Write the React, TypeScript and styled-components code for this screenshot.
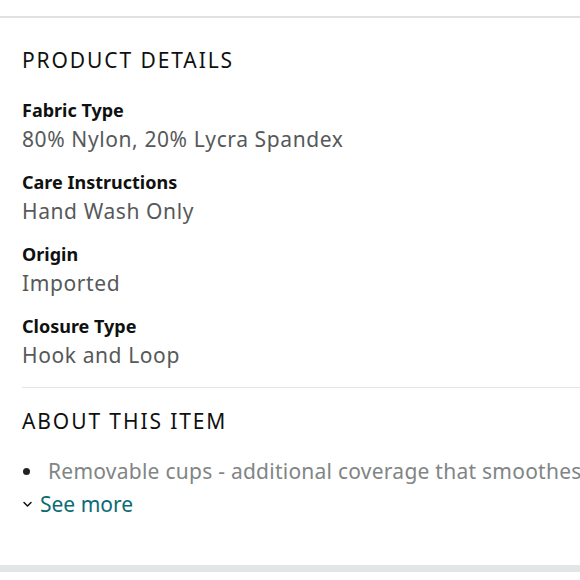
import React from "react";
import styled, { createGlobalStyle } from "styled-components";

interface Detail {
  label: string;
  value: string;
}

const details: Detail[] = [
  { label: "Fabric Type", value: "80% Nylon, 20% Lycra Spandex" },
  { label: "Care Instructions", value: "Hand Wash Only" },
  { label: "Origin", value: "Imported" },
  { label: "Closure Type", value: "Hook and Loop" },
];

const GlobalStyle = createGlobalStyle`
  html, body {
    margin: 0;
    padding: 0;
    background: #fff;
  }
  body {
    font-family: "Noto Sans", "Open Sans", sans-serif;
    color: #0f1111;
  }
`;

const Page = styled.div`
  width: 580px;
  height: 580px;
  overflow: hidden;
  display: flex;
  flex-direction: column;
  padding-top: 16px;
  box-sizing: border-box;
`;

const TopRule = styled.div`
  height: 2px;
  background: #dfe2e2;
`;

const Section = styled.section<{ $divided?: boolean }>`
  margin-left: 22px;
  padding-top: ${(p) => (p.$divided ? "19px" : "28px")};
  padding-bottom: 17px;
  border-top: ${(p) => (p.$divided ? "1px solid #e3e6e6" : "none")};
`;

const Heading = styled.h2<{ $gap?: number }>`
  margin: 0 0 ${(p) => p.$gap ?? 22}px;
  font-size: 21px;
  font-weight: 400;
  letter-spacing: 1.9px;
  line-height: 28px;
  color: #0f1111;
`;

const DetailList = styled.dl`
  margin: 0;
  display: flex;
  flex-direction: column;
  gap: 14px;
`;

const DetailGroup = styled.div`
  display: flex;
  flex-direction: column;
`;

const Label = styled.dt`
  font-size: 18px;
  font-weight: 700;
  line-height: 29px;
  color: #0f1111;
`;

const Value = styled.dd`
  margin: 0;
  font-size: 21px;
  letter-spacing: 0.6px;
  line-height: 29px;
  color: #565959;
`;

const Bullet = styled.div`
  display: flex;
  align-items: center;
  gap: 18px;
  white-space: nowrap;
  font-size: 21px;
  letter-spacing: 0.25px;
  line-height: 30px;
  color: #818585;
`;

const Dot = styled.span`
  flex: none;
  width: 7px;
  height: 7px;
  margin-left: 1px;
  border-radius: 50%;
  background: #222;
`;

const SeeMore = styled.a`
  display: inline-flex;
  align-items: center;
  gap: 7px;
  margin-top: 3px;
  font-size: 21px;
  line-height: 30px;
  color: #0a6b75;
  text-decoration: none;
  cursor: pointer;
`;

const BottomBar = styled.div`
  margin-top: auto;
  margin-bottom: 8px;
  height: 7px;
  background: #e3e6e6;
`;

export default function App() {
  return (
    <>
      <GlobalStyle />
      <Page>
        <TopRule />
        <Section>
          <Heading>PRODUCT DETAILS</Heading>
          <DetailList>
            {details.map((d) => (
              <DetailGroup key={d.label}>
                <Label>{d.label}</Label>
                <Value>{d.value}</Value>
              </DetailGroup>
            ))}
          </DetailList>
        </Section>
        <Section $divided>
          <Heading $gap={21}>ABOUT THIS ITEM</Heading>
          <Bullet>
            <Dot />
            <span>Removable cups - additional coverage that smoothes</span>
          </Bullet>
          <SeeMore>
            <svg width="11" height="8" viewBox="0 0 11 8" fill="none">
              <path d="M2 2.5l3.5 3.5 3.5-3.5" stroke="#0f1111" strokeWidth="1.5" strokeLinecap="round" strokeLinejoin="round" />
            </svg>
            See more
          </SeeMore>
        </Section>
        <BottomBar />
      </Page>
    </>
  );
}
